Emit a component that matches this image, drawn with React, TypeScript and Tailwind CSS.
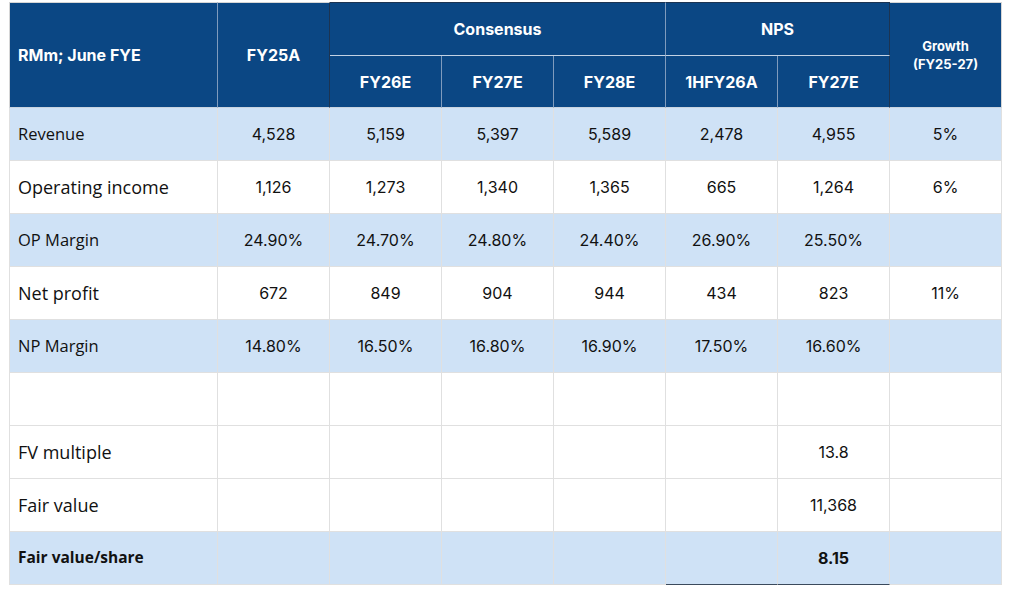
import React from "react";

type Row = { label: string; vals: string[]; shade: boolean; size?: "sm" | "lg"; bold?: boolean };

const ROWS: Row[] = [
  { label: "Revenue", vals: ["4,528", "5,159", "5,397", "5,589", "2,478", "4,955", "5%"], shade: true, size: "sm" },
  { label: "Operating income", vals: ["1,126", "1,273", "1,340", "1,365", "665", "1,264", "6%"], shade: false },
  { label: "OP Margin", vals: ["24.90%", "24.70%", "24.80%", "24.40%", "26.90%", "25.50%", ""], shade: true, size: "sm" },
  { label: "Net profit", vals: ["672", "849", "904", "944", "434", "823", "11%"], shade: false },
  { label: "NP Margin", vals: ["14.80%", "16.50%", "16.80%", "16.90%", "17.50%", "16.60%", ""], shade: true, size: "sm" },
  { label: "", vals: ["", "", "", "", "", "", ""], shade: false },
  { label: "FV multiple", vals: ["", "", "", "", "", "13.8", ""], shade: false },
  { label: "Fair value", vals: ["", "", "", "", "", "11,368", ""], shade: false },
  { label: "Fair value/share", vals: ["", "", "", "", "", "8.15", ""], shade: true, size: "sm", bold: true },
];

const head = "bg-[#0b4784] text-white font-bold text-center align-middle p-0";
const font = { fontFamily: "Inter, 'Liberation Sans', sans-serif" };

export default function App() {
  return (
    <div className="w-[1031px] h-[589px] bg-white pl-[9px] pt-[2px]">
      <table className="border-separate border-spacing-0 table-fixed w-[993px]" style={font}>
        <colgroup>
          <col className="w-[209px]" />
          <col className="w-[112px]" />
          <col className="w-[112px]" />
          <col className="w-[112px]" />
          <col className="w-[112px]" />
          <col className="w-[112px]" />
          <col className="w-[112px]" />
          <col className="w-[112px]" />
        </colgroup>
        <thead>
          <tr className="h-[54px]">
            <th rowSpan={2} className={`${head} text-left pl-[8px] text-[16px] border-l border-t border-r border-b border-l-[#d6d6d6] border-t-[#d6d6d6] border-r-[#7f9bbd] border-b-[#c9d3df]`}>
              RMm; June FYE
            </th>
            <th rowSpan={2} className={`${head} text-[16px] border-t border-r border-b border-t-[#d6d6d6] border-r-[#1c3452] border-b-[#c9d3df]`}>
              FY25A
            </th>
            <th colSpan={3} className={`${head} text-[16px] border-t border-r border-b border-t-[#1c3452] border-r-[#7f9bbd] border-b-[#c3d2e4]`}>
              Consensus
            </th>
            <th colSpan={2} className={`${head} text-[16px] border-t border-r border-b border-t-[#1c3452] border-r-[#1c3452] border-b-[#c3d2e4]`}>
              NPS
            </th>
            <th rowSpan={2} className={`${head} text-[13px] leading-[18px] border-t border-r border-b border-t-[#d6d6d6] border-r-[#d6d6d6] border-b-[#c9d3df]`}>
              Growth
              <br />
              (FY25-27)
            </th>
          </tr>
          <tr className="h-[52px]">
            {["FY26E", "FY27E", "FY28E", "1HFY26A", "FY27E"].map((t, i) => (
              <th
                key={i}
                className={`${head} text-[16px] border-r border-b border-b-[#c9d3df] ${i === 4 ? "border-r-[#1c3452]" : "border-r-[#7f9bbd]"}`}
              >
                {t}
              </th>
            ))}
          </tr>
        </thead>
        <tbody>
          {ROWS.map((r, ri) => {
            const bg = r.shade ? "bg-[#cfe2f6]" : "bg-white";
            const last = ri === ROWS.length - 1;
            return (
              <tr key={ri} className="h-[53px]">
                <td
                  className={`${bg} border-l border-r border-b border-[#e0e0e0] pl-[8px] text-[#111] ${
                    r.bold ? "font-bold text-[15.5px]" : r.size === "sm" ? "text-[16.5px]" : "text-[18px]"
                  }`}
                  style={{ fontFamily: "'Open Sans', sans-serif" }}
                >
                  {r.label}
                </td>
                {r.vals.map((v, vi) => (
                  <td
                    key={vi}
                    className={`${bg} border-r border-b text-center text-[16px] text-[#111] ${r.bold ? "font-bold" : ""} ${
                      last && (vi === 4 || vi === 5) ? "border-r-[#e0e0e0] border-b-[#3b4a5c]" : "border-[#e0e0e0]"
                    }`}
                  >
                    {v}
                  </td>
                ))}
              </tr>
            );
          })}
        </tbody>
      </table>
    </div>
  );
}
